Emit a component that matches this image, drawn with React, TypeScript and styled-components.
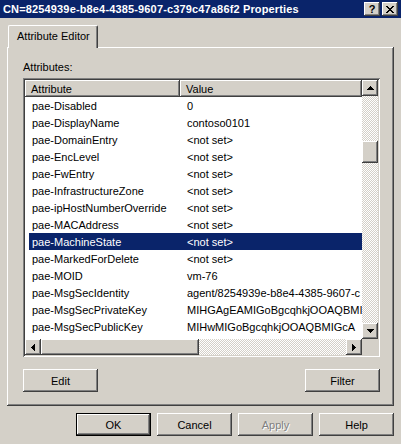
import React from "react";
import styled, { createGlobalStyle, css } from "styled-components";

const face = "#d4d0c8";
const shadow = "#808080";
const dark = "#404040";
const navy = "#0a246a";

const GlobalStyle = createGlobalStyle`
  html, body {
    margin: 0;
    padding: 0;
    background: ${face};
  }
  body {
    font-family: "Liberation Sans", Arial, sans-serif;
    font-size: 11px;
    color: #000;
  }
`;

// classic win 3d edges
const raised = css`
  box-shadow: inset -1px -1px ${dark}, inset 1px 1px #fff, inset -2px -2px ${shadow}, inset 2px 2px ${face};
`;

const checker = css`
  background-color: #fff;
  background-image: conic-gradient(${face} 25%, #fff 0 50%, ${face} 0 75%, #fff 0);
  background-size: 2px 2px;
`;

const Window = styled.div`
  width: 401px;
  height: 444px;
  background: ${face};
  display: flex;
  flex-direction: column;
  overflow: hidden;
`;

const TitleBar = styled.div`
  height: 18px;
  background: ${navy};
  color: #fff;
  display: flex;
  align-items: center;
  padding: 0 3px 0 3px;
`;

const Title = styled.span`
  flex: 1;
  white-space: nowrap;
  font-weight: bold;
  font-size: 11px;
  letter-spacing: 0.15px;
`;

const CaptionButtons = styled.div`
  display: flex;
  gap: 2px;
`;

const CaptionButton = styled.div`
  width: 16px;
  height: 14px;
  background: ${face};
  ${raised};
  display: flex;
  align-items: center;
  justify-content: center;
  color: #000;
  font-weight: bold;
  font-size: 11px;
`;

const Content = styled.div`
  display: flex;
  flex-direction: column;
  padding: 7px 7px 0 7px;
`;

const TabStrip = styled.div`
  display: flex;
  padding-left: 1px;
`;

const Tab = styled.div`
  position: relative;
  z-index: 1;
  height: 23px;
  margin-bottom: -1px;
  padding: 0 7px 2px 8px;
  display: flex;
  align-items: center;
  background: ${face};
  border-top: 1px solid #fff;
  border-left: 1px solid #fff;
  border-right: 1px solid ${dark};
  border-radius: 2px 2px 0 0;
  box-shadow: inset -1px 0 ${shadow};
  box-sizing: border-box;
`;

const TabPanel = styled.div`
  height: 359px;
  box-sizing: border-box;
  padding: 14px 14px 14px 16px;
  display: flex;
  flex-direction: column;
  box-shadow: inset -1px -1px ${dark}, inset 1px 1px #fff, inset -2px -2px ${shadow};
`;

const Label = styled.div`
  line-height: 13px;
  margin-bottom: 4px;
`;

const ListBox = styled.div`
  height: 279px;
  box-sizing: border-box;
  padding: 2px;
  box-shadow: inset 1px 1px ${shadow}, inset -1px -1px #fff, inset 2px 2px ${dark}, inset -2px -2px ${face};
  display: grid;
  grid-template-columns: 1fr 16px;
  grid-template-rows: 1fr 16px;
`;

const ListArea = styled.div`
  background: #fff;
  overflow: hidden;
  white-space: nowrap;
`;

const HeaderRow = styled.div`
  display: flex;
  height: 17px;
`;

const HeaderCell = styled.div<{ $w?: number }>`
  ${({ $w }) => ($w ? `width: ${$w}px;` : "flex: 1;")}
  flex-shrink: 0;
  height: 17px;
  box-sizing: border-box;
  padding-left: 6px;
  display: flex;
  align-items: center;
  background: ${face};
  box-shadow: inset -1px -1px ${dark}, inset 1px 1px #fff, inset -2px -2px ${shadow};
`;

const Row = styled.div<{ $selected?: boolean }>`
  display: flex;
  height: 17px;
  margin-left: 4px;
  align-items: center;
  background: ${({ $selected }) => ($selected ? navy : "transparent")};
  color: ${({ $selected }) => ($selected ? "#fff" : "#000")};
`;

const AttrCell = styled.div`
  width: 151px;
  flex-shrink: 0;
  padding-left: 3px;
  box-sizing: border-box;
`;

const ValueCell = styled.div`
  padding-left: 7px;
`;

const VScroll = styled.div`
  display: flex;
  flex-direction: column;
`;

const HScroll = styled.div`
  display: flex;
`;

const Track = styled.div`
  flex: 1;
  ${checker};
`;

const ArrowButton = styled.div`
  width: 16px;
  height: 16px;
  flex-shrink: 0;
  background: ${face};
  ${raised};
  display: flex;
  align-items: center;
  justify-content: center;
`;

const VThumb = styled.div<{ $h: number }>`
  height: ${({ $h }) => $h}px;
  background: ${face};
  ${raised};
`;

const HThumb = styled.div<{ $w: number }>`
  width: ${({ $w }) => $w}px;
  flex-shrink: 0;
  background: ${face};
  ${raised};
`;

const Corner = styled.div`
  background: ${face};
`;

const ButtonRow = styled.div`
  display: flex;
  justify-content: space-between;
  margin-top: 12px;
`;

const Button = styled.div<{ $default?: boolean; $disabled?: boolean }>`
  width: 75px;
  height: 23px;
  box-sizing: border-box;
  display: flex;
  align-items: center;
  justify-content: center;
  background: ${face};
  ${({ $default }) =>
    $default
      ? `box-shadow: inset 0 0 0 1px #000, inset -2px -2px ${dark}, inset 2px 2px #fff, inset -3px -3px ${shadow};`
      : `box-shadow: inset -1px -1px ${dark}, inset 1px 1px #fff, inset -2px -2px ${shadow};`}
  ${({ $disabled }) => ($disabled ? `color: ${shadow}; text-shadow: 1px 1px #fff;` : "")}
`;

const DialogButtons = styled.div`
  display: flex;
  justify-content: flex-end;
  gap: 6px;
  margin-top: 7px;
`;

type Dir = "up" | "down" | "left" | "right";

const Arrow = ({ dir }: { dir: Dir }) => {
  const vertical = dir === "up" || dir === "down";
  const rects = [0, 1, 2, 3].map((i) => {
    const step = dir === "up" || dir === "left" ? i : 3 - i;
    return vertical ? (
      <rect key={i} x={3 - step} y={i} width={step * 2 + 1} height={1} />
    ) : (
      <rect key={i} x={i} y={3 - step} width={1} height={step * 2 + 1} />
    );
  });
  return (
    <svg width={vertical ? 7 : 4} height={vertical ? 4 : 7} shapeRendering="crispEdges" fill="#000">
      {rects}
    </svg>
  );
};

const CloseGlyph = () => (
  <svg width={8} height={7} shapeRendering="crispEdges" fill="#000">
    {[0, 1, 2, 3, 4, 5, 6].map((i) => (
      <g key={i}>
        <rect x={i} y={i} width={2} height={1} />
        <rect x={6 - i} y={i} width={2} height={1} />
      </g>
    ))}
  </svg>
);

// values are cut where the list view clips them
const attributes: [string, string][] = [
  ["pae-Disabled", "0"],
  ["pae-DisplayName", "contoso0101"],
  ["pae-DomainEntry", "<not set>"],
  ["pae-EncLevel", "<not set>"],
  ["pae-FwEntry", "<not set>"],
  ["pae-InfrastructureZone", "<not set>"],
  ["pae-ipHostNumberOverride", "<not set>"],
  ["pae-MACAddress", "<not set>"],
  ["pae-MachineState", "<not set>"],
  ["pae-MarkedForDelete", "<not set>"],
  ["pae-MOID", "vm-76"],
  ["pae-MsgSecIdentity", "agent/8254939e-b8e4-4385-9607-c"],
  ["pae-MsgSecPrivateKey", "MIHGAgEAMIGoBgcqhkjOOAQBMI"],
  ["pae-MsgSecPublicKey", "MIHwMIGoBgcqhkjOOAQBMIGcA"],
];

const selected = "pae-MachineState";

const App = () => {
  return (
    <Window>
      <GlobalStyle />
      <TitleBar>
        <Title>CN=8254939e-b8e4-4385-9607-c379c47a86f2 Properties</Title>
        <CaptionButtons>
          <CaptionButton>?</CaptionButton>
          <CaptionButton>
            <CloseGlyph />
          </CaptionButton>
        </CaptionButtons>
      </TitleBar>

      <Content>
        <TabStrip>
          <Tab>Attribute Editor</Tab>
        </TabStrip>
        <TabPanel>
          <Label>Attributes:</Label>
          <ListBox>
            <ListArea>
              <HeaderRow>
                <HeaderCell $w={155}>Attribute</HeaderCell>
                <HeaderCell>Value</HeaderCell>
              </HeaderRow>
              {attributes.map(([name, value]) => (
                <Row key={name} $selected={name === selected}>
                  <AttrCell>{name}</AttrCell>
                  <ValueCell>{value}</ValueCell>
                </Row>
              ))}
            </ListArea>
            <VScroll>
              <ArrowButton>
                <Arrow dir="up" />
              </ArrowButton>
              <Track style={{ paddingTop: 45 }}>
                <VThumb $h={22} />
              </Track>
              <ArrowButton>
                <Arrow dir="down" />
              </ArrowButton>
            </VScroll>
            <HScroll>
              <ArrowButton>
                <Arrow dir="left" />
              </ArrowButton>
              <HThumb $w={158} />
              <Track />
              <ArrowButton>
                <Arrow dir="right" />
              </ArrowButton>
            </HScroll>
            <Corner />
          </ListBox>
          <ButtonRow>
            <Button>Edit</Button>
            <Button>Filter</Button>
          </ButtonRow>
        </TabPanel>
        <DialogButtons>
          <Button $default>OK</Button>
          <Button>Cancel</Button>
          <Button $disabled>Apply</Button>
          <Button>Help</Button>
        </DialogButtons>
      </Content>
    </Window>
  );
};

export default App;
